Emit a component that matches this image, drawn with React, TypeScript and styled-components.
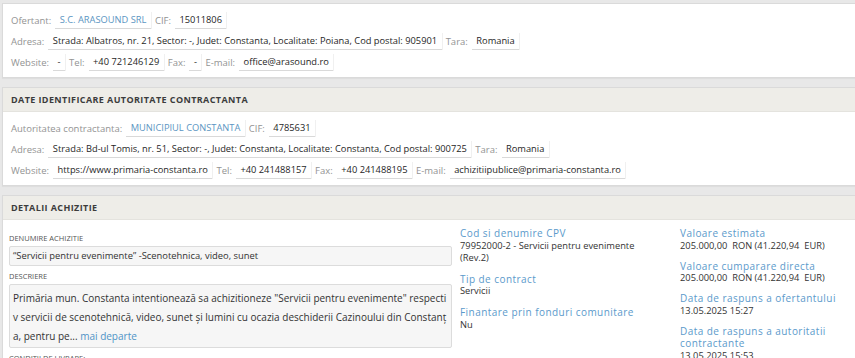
import React from "react";
import styled, { createGlobalStyle } from "styled-components";

const Global = createGlobalStyle`
  html, body { margin: 0; padding: 0; background: #e8e8e8; overflow: hidden; }
  body { font-family: "Open Sans", "DejaVu Sans", sans-serif; color: #333; }
`;

const Page = styled.div`
  padding: 3px 0 0 2px;
  display: flex;
  flex-direction: column;
  gap: 9px;
`;

const Panel = styled.section`
  background: #fff;
  border: 1px solid #dadada;
  border-right: none;
  box-shadow: 0 1px 1px rgba(0, 0, 0, 0.04);
`;

const Header = styled.div`
  background: #eeede8;
  height: 23px;
  display: flex;
  align-items: center;
  padding: 0 8px;
  font-size: 9px;
  font-weight: 700;
  color: #3c3c3c;
  letter-spacing: 0.4px;
  text-transform: uppercase;
  border-bottom: 1px solid #e4e3de;
`;

const Body = styled.div`
  padding: 6px 8px 4px;
  display: flex;
  flex-direction: column;
`;

const Row = styled.div`
  display: flex;
  align-items: center;
  height: 21px;
  gap: 4px;
  white-space: nowrap;
`;

const Label = styled.span`
  color: #939393;
  font-size: 9.5px;
`;

const Value = styled.span<{ $link?: boolean }>`
  color: ${(p) => (p.$link ? "#5b95c2" : "#262626")};
  font-size: 9.3px;
  padding: 1px 4.5px 2px;
  border-bottom: 1px solid #d9d9d9;
  box-shadow: 1px 0 0 #f0f0f0;
`;

const Details = styled.div`
  display: grid;
  grid-template-columns: 443px 212px 1fr;
  column-gap: 8px;
  padding: 7px 0 0 6px;
`;

const LeftCol = styled.div`
  display: flex;
  flex-direction: column;
  padding-top: 6px;
`;

const FieldLabel = styled.div`
  font-size: 7.5px;
  line-height: 11px;
  color: #555;
  text-transform: uppercase;
  margin-bottom: 2px;
`;

const FieldBox = styled.div<{ $multi?: boolean }>`
  background: #f6f6f6;
  border: 1px solid #dcdcdc;
  border-radius: 2px;
  padding: ${(p) => (p.$multi ? "4px 3px 0" : "0 3px")};
  font-size: ${(p) => (p.$multi ? "10px" : "9.4px")};
  line-height: ${(p) => (p.$multi ? "19.2px" : "18px")};
  color: #333;
  margin-bottom: 5px;
  white-space: nowrap;
  overflow: hidden;
`;

const More = styled.a`
  color: #4f94c6;
  text-decoration: none;
`;

const InfoCol = styled.div<{ $gap: number }>`
  display: flex;
  flex-direction: column;
  gap: ${(p) => p.$gap}px;
`;

const InfoItem = styled.div<{ $w?: number }>`
  max-width: ${(p) => p.$w ?? 200}px;
`;

const InfoTitle = styled.div`
  color: #5b9acb;
  font-size: 10px;
  letter-spacing: 0.45px;
  line-height: 12.5px;
`;

const InfoValue = styled.div`
  color: #333;
  font-size: 9.3px;
  line-height: 12px;
`;

export default function App() {
  return (
    <>
      <Global />
      <Page>
        <Panel>
          <Body>
            <Row>
              <Label>Ofertant:</Label>
              <Value $link>S.C. ARASOUND SRL</Value>
              <Label>CIF:</Label>
              <Value>15011806</Value>
            </Row>
            <Row>
              <Label>Adresa:</Label>
              <Value>
                Strada: Albatros, nr. 21, Sector: -, Judet: Constanta, Localitate: Poiana, Cod postal: 905901
              </Value>
              <Label>Tara:</Label>
              <Value>Romania</Value>
            </Row>
            <Row>
              <Label>Website:</Label>
              <Value>-</Value>
              <Label>Tel:</Label>
              <Value>+40 721246129</Value>
              <Label>Fax:</Label>
              <Value>-</Value>
              <Label>E-mail:</Label>
              <Value>office@arasound.ro</Value>
            </Row>
          </Body>
        </Panel>

        <Panel>
          <Header>Date identificare autoritate contractanta</Header>
          <Body>
            <Row>
              <Label>Autoritatea contractanta:</Label>
              <Value $link>MUNICIPIUL CONSTANTA</Value>
              <Label>CIF:</Label>
              <Value>4785631</Value>
            </Row>
            <Row>
              <Label>Adresa:</Label>
              <Value>
                Strada: Bd-ul Tomis, nr. 51, Sector: -, Judet: Constanta, Localitate: Constanta, Cod postal: 900725
              </Value>
              <Label>Tara:</Label>
              <Value>Romania</Value>
            </Row>
            <Row>
              <Label>Website:</Label>
              <Value>https://www.primaria-constanta.ro</Value>
              <Label>Tel:</Label>
              <Value>+40 241488157</Value>
              <Label>Fax:</Label>
              <Value>+40 241488195</Value>
              <Label>E-mail:</Label>
              <Value>achizitiipublice@primaria-constanta.ro</Value>
            </Row>
          </Body>
        </Panel>

        <Panel>
          <Header>Detalii achizitie</Header>
          <Details>
            <LeftCol>
              <FieldLabel>Denumire achizitie</FieldLabel>
              <FieldBox>“Servicii pentru evenimente” -Scenotehnica, video, sunet</FieldBox>
              <FieldLabel>Descriere</FieldLabel>
              <FieldBox $multi>
                Primăria mun. Constanta intentionează sa achizitioneze "Servicii pentru evenimente" respecti
                <br />
                v servicii de scenotehnică, video, sunet și lumini cu ocazia deschiderii Cazinoului din Constanț
                <br />
                a, pentru pe... <More href="#">mai departe</More>
              </FieldBox>
              <FieldLabel>Conditii de livrare:</FieldLabel>
            </LeftCol>
            <InfoCol $gap={9}>
              <InfoItem $w={185}>
                <InfoTitle>Cod si denumire CPV</InfoTitle>
                <InfoValue>79952000-2 - Servicii pentru evenimente (Rev.2)</InfoValue>
              </InfoItem>
              <InfoItem>
                <InfoTitle>Tip de contract</InfoTitle>
                <InfoValue>Servicii</InfoValue>
              </InfoItem>
              <InfoItem>
                <InfoTitle>Finantare prin fonduri comunitare</InfoTitle>
                <InfoValue>Nu</InfoValue>
              </InfoItem>
            </InfoCol>
            <InfoCol $gap={8}>
              <InfoItem $w={165}>
                <InfoTitle>Valoare estimata</InfoTitle>
                <InfoValue>205.000,00&nbsp; RON (41.220,94&nbsp; EUR)</InfoValue>
              </InfoItem>
              <InfoItem $w={165}>
                <InfoTitle>Valoare cumparare directa</InfoTitle>
                <InfoValue>205.000,00&nbsp; RON (41.220,94&nbsp; EUR)</InfoValue>
              </InfoItem>
              <InfoItem $w={165}>
                <InfoTitle>Data de raspuns a ofertantului</InfoTitle>
                <InfoValue>13.05.2025 15:27</InfoValue>
              </InfoItem>
              <InfoItem $w={165}>
                <InfoTitle>Data de raspuns a autoritatii contractante</InfoTitle>
                <InfoValue>13.05.2025 15:53</InfoValue>
              </InfoItem>
            </InfoCol>
          </Details>
        </Panel>
      </Page>
    </>
  );
}
